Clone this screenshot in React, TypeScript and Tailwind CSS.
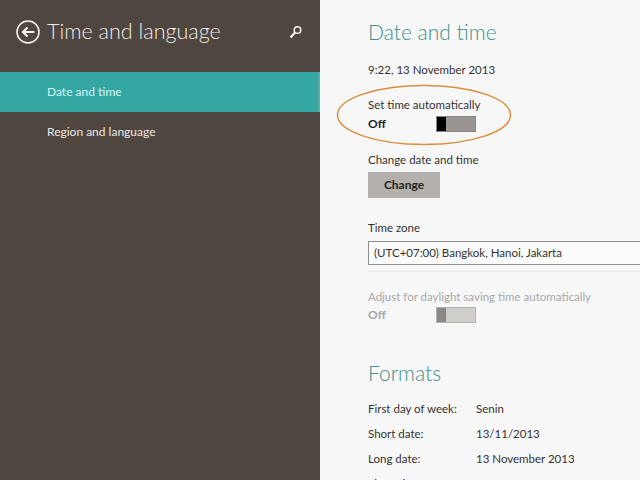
const font = { fontFamily: 'Lato, "Open Sans", sans-serif' }

function Toggle({ disabled }: { disabled?: boolean }) {
  return (
    <div className={`flex w-[40px] h-[16px] border ${disabled ? 'border-[#b5b3b1] bg-[#d0cecb]' : 'border-[#8a8684] bg-[#9a9593]'}`}>
      <div className={`w-[9px] h-full ${disabled ? 'bg-[#8b8886]' : 'bg-black'}`} />
    </div>
  )
}

function FormatRow({ label, value }: { label: string; value: string }) {
  return (
    <div className="flex h-[25px] items-center text-[11.5px] text-[#333]">
      <div className="w-[108px] shrink-0">{label}</div>
      <div>{value}</div>
    </div>
  )
}

export default function App() {
  return (
    <div className="flex w-[640px] h-[480px] overflow-hidden" style={font}>
      <div className="w-[320px] shrink-0 bg-[#4f4640] text-white">
        <div className="flex items-center h-[72px] pb-[8px] pl-[16px] pr-[16px]">
          <svg width="24" height="24" viewBox="0 0 24 24" fill="none" stroke="#f4f1ee" className="shrink-0">
            <circle cx="12" cy="12" r="11" strokeWidth="1.6" />
            <path d="M18.5 12H7M11.5 7.5 7 12l4.500 4.500" strokeWidth="2.2" />
          </svg>
          <h1 className="ml-[7px] text-[21.5px] font-light text-[#eeeae6] leading-none">Time and language</h1>
          <svg width="14" height="14" viewBox="0 0 14 14" fill="none" stroke="#f4f1ee" className="ml-auto mr-[1px]">
            <circle cx="8.500" cy="5" r="3.300" strokeWidth="1.500" />
            <path d="M6 7.500 1.500 12.500" strokeWidth="2.200" />
          </svg>
        </div>
        <div className="flex items-center h-[40px] pl-[47px] bg-[#35a7a2] border-r-2 border-[#52b0aa] text-[12px] text-[#d6f5f2]">Date and time</div>
        <div className="flex items-center h-[40px] pl-[47px] text-[12px] text-[#ece8e4]">Region and language</div>
      </div>

      <div className="relative flex-1 bg-[#f7f7f7] pl-[48px] pt-[17px] overflow-hidden">
        <h2 className="text-[21px] font-light leading-[30px] text-[#3f9189]">Date and time</h2>
        <p className="mt-[15px] text-[11.5px] leading-[16px] text-[#333]">9:22, 13 November 2013</p>

        <p className="mt-[19px] text-[11.5px] leading-[16px] text-[#333]">Set time automatically</p>
        <div className="flex items-center h-[18px] mt-[2px] text-[12px] font-bold text-[#222]">
          <span className="w-[68px]">Off</span>
          <Toggle />
        </div>

        <p className="mt-[19px] text-[11.5px] leading-[16px] text-[#333]">Change date and time</p>
        <button className="block mt-[4px] w-[72px] h-[26px] bg-[#b3b0ad] text-[12px] font-bold text-[#222]">Change</button>

        <p className="mt-[22px] text-[11.5px] leading-[16px] text-[#333]">Time zone</p>
        <div className="mt-[5px] w-[300px] pb-[6px] border-b border-[#e8e8e8]">
          <div className="flex items-center h-[24px] pl-[5px] border border-[#8f8f8f] bg-[#fbfbfb] text-[11.5px] text-[#333]">
            (UTC+07:00) Bangkok, Hanoi, Jakarta
          </div>
        </div>

        <p className="mt-[17px] text-[11.5px] leading-[16px] text-[#a9a9a9]">Adjust for daylight saving time automatically</p>
        <div className="flex items-center h-[18px] mt-[1px] text-[12px] font-bold text-[#a5a5a5]">
          <span className="w-[68px]">Off</span>
          <Toggle disabled />
        </div>

        <h2 className="mt-[34px] text-[21px] font-light leading-[30px] text-[#3f9189]">Formats</h2>
        <div className="mt-[8px]">
          <FormatRow label="First day of week:" value="Senin" />
          <FormatRow label="Short date:" value="13/11/2013" />
          <FormatRow label="Long date:" value="13 November 2013" />
          <FormatRow label="Short time:" value="9:22" />
        </div>

        <svg width="176" height="62" viewBox="0 0 176 62" fill="none" className="absolute left-[16px] top-[84px]">
          <ellipse cx="88" cy="31" rx="86.500" ry="29.500" stroke="#d98f3f" strokeWidth="1.500" />
        </svg>
      </div>
    </div>
  )
}
